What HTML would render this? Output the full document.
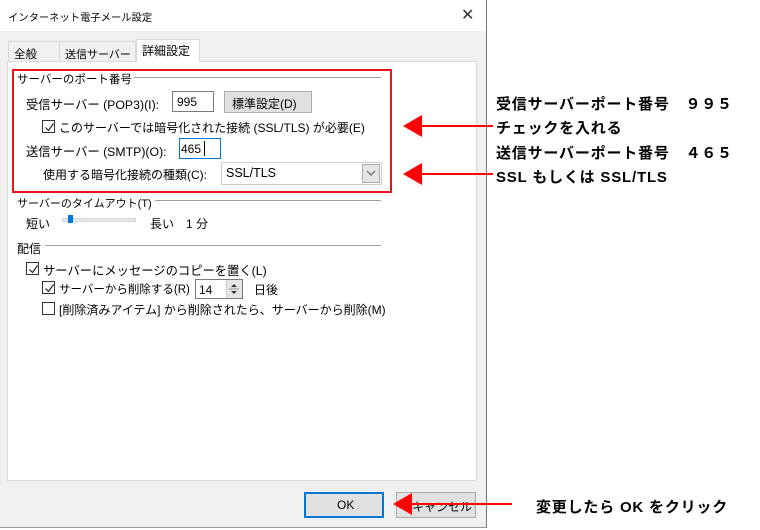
<!DOCTYPE html>
<html><head><meta charset="utf-8"><style>
*{margin:0;padding:0;box-sizing:border-box}
body{width:760px;height:530px;background:#fff;position:relative;overflow:hidden;font-family:"Liberation Sans","Noto Sans CJK JP",sans-serif;font-size:12px;color:#000}
.a{position:absolute;white-space:nowrap}
.cb{position:absolute;width:13px;height:13px;border:1px solid #333;background:#fff}
.cb svg{position:absolute;left:1px;top:1px}
.ln{position:absolute;height:1px;background:#a0a0a0}
.r{font-weight:bold;font-size:15px;letter-spacing:0.8px}
</style></head><body>
<div class="a" style="left:0;top:0;width:487px;height:528px;background:#f0f0f0;border-right:1px solid #777;border-bottom:1px solid #999"></div>
<div class="a" style="left:0;top:0;width:486px;height:31px;background:#fff"></div>
<div class="a" style="left:8px;top:9px;font-size:10.3px">インターネット電子メール設定</div>
<div class="a" style="left:461px;top:5px;font-size:16px;color:#333">✕</div>
<!-- tabs -->
<div class="a" style="left:8px;top:41px;width:52px;height:21px;border:1px solid #d9d9d9;border-bottom:none;background:#f0f0f0"></div>
<div class="a" style="left:14px;top:46px;font-size:11.5px">全般</div>
<div class="a" style="left:59px;top:41px;width:77px;height:21px;border:1px solid #d9d9d9;border-bottom:none;background:#f0f0f0"></div>
<div class="a" style="left:65px;top:46px;font-size:11px">送信サーバー</div>
<div class="a" style="left:136px;top:39px;width:64px;height:23px;border:1px solid #d9d9d9;border-bottom:none;background:#fff;z-index:2"></div>
<div class="a" style="left:142px;top:42px;z-index:3;font-size:12px">詳細設定</div>
<div class="a" style="left:7px;top:61px;width:470px;height:420px;background:#fff;border:1px solid #d9d9d9"></div>
<!-- port group -->
<div class="ln" style="left:127px;top:77px;width:254px"></div>
<div class="a" style="left:17px;top:71px;font-size:11.5px;background:#fff;padding-right:2px">サーバーのポート番号</div>
<div class="a" style="left:26px;top:95px;font-size:12.3px">受信サーバー (POP3)(I):</div>
<div class="a" style="left:172px;top:91px;width:42px;height:21px;border:1px solid #7a7a7a;background:#fff"></div>
<div class="a" style="left:177px;top:95px">995</div>
<div class="a" style="left:224px;top:91px;width:88px;height:22px;border:1px solid #adadad;background:#e1e1e1"></div>
<div class="a" style="left:232px;top:95px">標準設定(D)</div>
<div class="cb" style="left:42px;top:120px"><svg width="11" height="11"><path d="M1.5 5.5 L4.5 8.5 L9.5 1.5" stroke="#222" fill="none" stroke-width="1.2"/></svg></div>
<div class="a" style="left:59px;top:119px">このサーバーでは暗号化された接続 (SSL/TLS) が必要(E)</div>
<div class="a" style="left:26px;top:142px;font-size:12.3px">送信サーバー (SMTP)(O):</div>
<div class="a" style="left:179px;top:138px;width:42px;height:21px;border:1px solid #0078d7;background:#fff"></div>
<div class="a" style="left:181px;top:142px">465</div>
<div class="a" style="left:204px;top:141px;width:1px;height:15px;background:#000"></div>
<div class="a" style="left:43px;top:166px">使用する暗号化接続の種類(C):</div>
<div class="a" style="left:221px;top:162px;width:161px;height:23px;border:1px solid #ccc;background:#fff"></div>
<div class="a" style="left:226px;top:166px;font-size:12.5px">SSL/TLS</div>
<div class="a" style="left:362px;top:164px;width:18px;height:19px;border:1px solid #adadad;background:#e5e5e5"></div>
<svg class="a" style="left:366px;top:170px" width="10" height="6"><path d="M1 1 L5 5 L9 1" stroke="#555" fill="none"/></svg>
<div class="a" style="left:12px;top:69px;width:380px;height:124px;border:2px solid #e8141c"></div>
<!-- timeout -->
<div class="ln" style="left:150px;top:200px;width:231px"></div>
<div class="a" style="left:17px;top:195px;font-size:11px;background:#fff;padding-right:3px">サーバーのタイムアウト(T)</div>
<div class="a" style="left:26px;top:215px">短い</div>
<div class="a" style="left:62px;top:218px;width:74px;height:4px;background:#e7e7e7;border:1px solid #d6d6d6"></div>
<div class="a" style="left:68px;top:215px;width:5px;height:8px;background:#0078d7"></div>
<div class="a" style="left:150px;top:215px">長い　1 分</div>
<div class="a" style="left:17px;top:240px">配信</div>
<div class="ln" style="left:45px;top:245px;width:336px"></div>
<div class="cb" style="left:26px;top:262px"><svg width="11" height="11"><path d="M1.5 5.5 L4.5 8.5 L9.5 1.5" stroke="#222" fill="none" stroke-width="1.2"/></svg></div>
<div class="a" style="left:43px;top:261px;font-size:12.3px">サーバーにメッセージのコピーを置く(L)</div>
<div class="cb" style="left:42px;top:281px"><svg width="11" height="11"><path d="M1.5 5.5 L4.5 8.5 L9.5 1.5" stroke="#222" fill="none" stroke-width="1.2"/></svg></div>
<div class="a" style="left:59px;top:281px;font-size:11.5px">サーバーから削除する(R)</div>
<div class="a" style="left:195px;top:279px;width:48px;height:20px;border:1px solid #7a7a7a;background:#fff"></div>
<div class="a" style="left:199px;top:283px">14</div>
<div class="a" style="left:226px;top:280px;width:16px;height:18px;background:#e5e5e5;border-left:1px solid #ccc"></div>
<svg class="a" style="left:229px;top:282px" width="10" height="14"><path d="M2 5 L5 2 L8 5Z M2 9 L5 12 L8 9Z" fill="#333"/><line x1="0" y1="7" x2="10" y2="7" stroke="#999"/></svg>
<div class="a" style="left:254px;top:281px">日後</div>
<div class="cb" style="left:42px;top:302px"></div>
<div class="a" style="left:59px;top:301px">[削除済みアイテム] から削除されたら、サーバーから削除(M)</div>
<!-- buttons -->
<div class="a" style="left:304px;top:492px;width:80px;height:26px;border:2px solid #0078d7;background:#e1e1e1"></div>
<div class="a" style="left:337px;top:498px">OK</div>
<div class="a" style="left:396px;top:492px;width:80px;height:26px;border:1px solid #adadad;background:#e1e1e1"></div>
<div class="a" style="left:412px;top:498px">キャンセル</div>
<!-- arrows -->
<svg class="a" style="left:0;top:0" width="760" height="530">
<g fill="#f00" stroke="#f00">
<line x1="420" y1="126" x2="493" y2="126" stroke-width="2"/><path d="M403 126 L422 115 L422 137Z" stroke="none"/>
<line x1="420" y1="174" x2="493" y2="174" stroke-width="2"/><path d="M403 174 L422 163 L422 185Z" stroke="none"/>
<line x1="410" y1="504" x2="512" y2="504" stroke-width="2"/><path d="M393 504 L412 493 L412 515Z" stroke="none"/>
</g></svg>
<div class="a r" style="left:496px;top:93px">受信サーバーポート番号　９９５</div>
<div class="a r" style="left:496px;top:117px">チェックを入れる</div>
<div class="a r" style="left:496px;top:142px">送信サーバーポート番号　４６５</div>
<div class="a r" style="left:496px;top:166px">SSL もしくは SSL/TLS</div>
<div class="a r" style="left:536px;top:496px">変更したら OK をクリック</div>
</body></html>
